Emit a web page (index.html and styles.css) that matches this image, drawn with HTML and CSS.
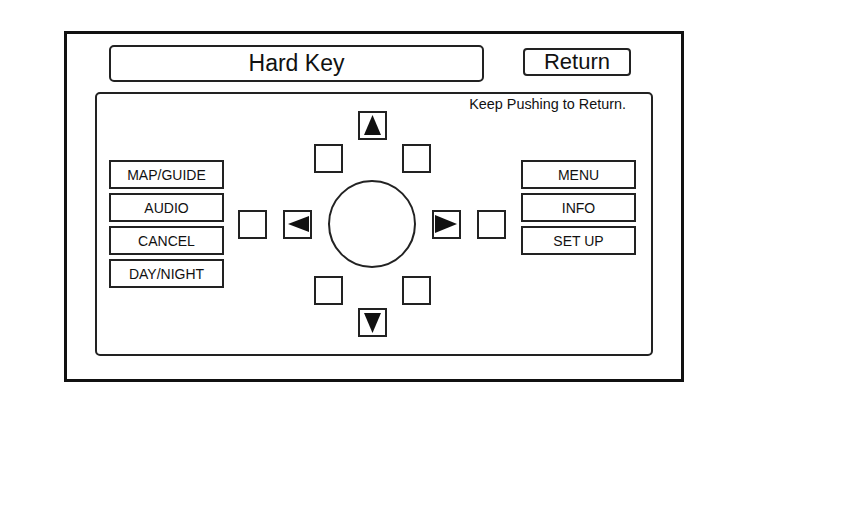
FILE: index.html
```html
<!DOCTYPE html>
<html lang="en">
<head>
  <meta charset="UTF-8" />
  <title>Hard Key</title>
  <meta name="viewport" content="width=device-width, initial-scale=1.0"/>
  <link rel="stylesheet" href="styles.css">
</head>
<body>

<div class="screen">
  <div class="header">
    <div class="title">Hard Key</div>
    <div class="return-btn">Return</div>
  </div>

  <div class="panel">
    <div class="note">Keep Pushing to Return.</div>

    <div class="keys">
      <div class="key">MAP/GUIDE</div>
      <div class="key">AUDIO</div>
      <div class="key">CANCEL</div>
      <div class="key">DAY/NIGHT</div>
    </div>

    <div class="dpad">
      <div class="box">
        <svg viewBox="0 0 25 25"><polygon points="12.5,2 4,22 21,22"/></svg>
      </div>
      <div class="pair top-pair">
        <div class="box"></div>
        <div class="box"></div>
      </div>
      <div class="middle">
        <div class="box"></div>
        <div class="box">
          <svg viewBox="0 0 25 25"><polygon points="3,12 24,4 24,20"/></svg>
        </div>
        <div class="dial"></div>
        <div class="box">
          <svg viewBox="0 0 25 25"><polygon points="1,3 1,21 23,12"/></svg>
        </div>
        <div class="box"></div>
      </div>
      <div class="pair bottom-pair">
        <div class="box"></div>
        <div class="box"></div>
      </div>
      <div class="box down">
        <svg viewBox="0 0 25 25"><polygon points="4,3 21,3 12.5,23"/></svg>
      </div>
    </div>

    <div class="keys">
      <div class="key">MENU</div>
      <div class="key">INFO</div>
      <div class="key">SET UP</div>
    </div>
  </div>
</div>

</body>
</html>
```

FILE: styles.css
```css
* { box-sizing: border-box; }
body { margin: 0; background: #fff; font-family: "Liberation Sans", Arial, sans-serif; color: #111; }

.screen {
  width: 620px;
  height: 351px;
  margin: 31px 0 0 64px;
  border: 3px solid #111;
}

.header { display: flex; align-items: flex-start; padding: 11px 0 0 42px; }
.title {
  width: 375px;
  height: 37px;
  border: 2px solid #222;
  border-radius: 5px;
  font-size: 23px;
  line-height: 32px;
  text-align: center;
}
.return-btn {
  width: 108px;
  height: 28px;
  margin: 3px 0 0 39px;
  border: 2px solid #222;
  border-radius: 4px;
  font-size: 22px;
  line-height: 23px;
  text-align: center;
}

.panel {
  position: relative;
  display: flex;
  align-items: flex-start;
  width: 558px;
  height: 264px;
  margin: 10px 0 0 28px;
  border: 2px solid #222;
  border-radius: 5px;
}
.note {
  position: absolute;
  top: 2px;
  right: 25px;
  font-size: 14.4px;
}

.keys { display: flex; flex-direction: column; gap: 4px; margin: 66px 0 0 12px; }
.keys:last-child { margin-left: 15px; }
.key {
  width: 115px;
  height: 29px;
  border: 2px solid #222;
  font-size: 14px;
  line-height: 26px;
  text-align: center;
}

.dpad { display: flex; flex-direction: column; align-items: center; width: 268px; margin: 17px 0 0 14px; }
.box { width: 29px; height: 29px; border: 2px solid #222; }
.box svg { display: block; width: 25px; height: 25px; fill: #111; }
.pair { display: flex; gap: 59px; }
.top-pair { margin-top: 4px; }
.bottom-pair { margin-top: 8px; }
.down { margin-top: 3px; }
.middle { display: flex; align-items: center; gap: 16px; margin-top: 7px; }
.dial { width: 88px; height: 88px; border: 2px solid #222; border-radius: 50%; }
```
